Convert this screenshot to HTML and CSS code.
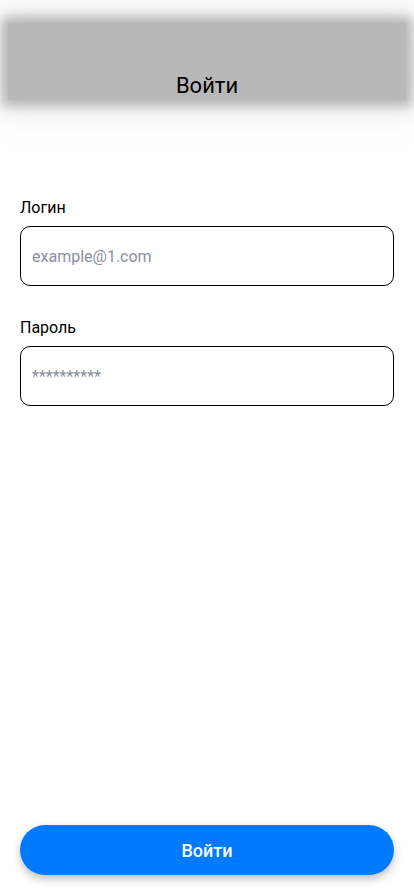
FILE: index.html
```html
<!DOCTYPE html>
<html lang="ru">
<head>
<meta charset="utf-8">
<title>Войти</title>
<link rel="stylesheet" href="styles.css">
</head>
<body>
<div class="page">
  <header class="topbar">
    <div class="topbar-inner">
      <h1 class="title">Войти</h1>
    </div>
  </header>
  <main class="form">
    <label class="field">
      <span class="label">Логин</span>
      <input class="input" type="text" placeholder="example@1.com">
    </label>
    <label class="field">
      <span class="label">Пароль</span>
      <input class="input" type="text" placeholder="**********">
    </label>
  </main>
  <footer class="actions">
    <button class="submit" type="button">Войти</button>
  </footer>
</div>
</body>
</html>
```

FILE: styles.css
```css
* { box-sizing: border-box; }
html, body { margin: 0; padding: 0; background: #fff; }
body {
  font-family: Roboto, "Liberation Sans", sans-serif;
  color: #000;
}
.page {
  min-height: 896px;
  display: flex;
  flex-direction: column;
}
.topbar {
  padding: 23px 8px 10px;
  background: #fff;
}
.topbar-inner {
  height: 77px;
  background: #b8b8b8;
  box-shadow: 0 0 10px 6px #b8b8b8, 0 0 30px 10px rgba(184,184,184,0.4);
  display: flex;
  align-items: flex-end;
  justify-content: center;
  padding-bottom: 1px;
}
.title {
  margin: 0;
  font-size: 22px;
  font-weight: 400;
  line-height: 26px;
}
.form {
  padding: 88px 20px 0;
  display: flex;
  flex-direction: column;
  gap: 32px;
}
.field {
  display: flex;
  flex-direction: column;
  gap: 9px;
}
.label {
  font-size: 16px;
  line-height: 19px;
}
.input {
  height: 60px;
  border: 1px solid #000;
  border-radius: 10px;
  padding: 0 11px;
  font-family: Roboto, "Liberation Sans", sans-serif;
  font-size: 16px;
  background: #fff;
  outline: none;
}
.input::placeholder { color: #8a8fa3; }
.actions {
  margin-top: auto;
  padding: 0 20px 21px;
}
.submit {
  width: 100%;
  height: 50px;
  border: none;
  border-radius: 25px;
  background: #007aff;
  color: #fff;
  font-family: Roboto, "Liberation Sans", sans-serif;
  font-size: 18px;
  font-weight: 500;
  box-shadow: 0 4px 8px rgba(0,0,0,0.25);
}
```
